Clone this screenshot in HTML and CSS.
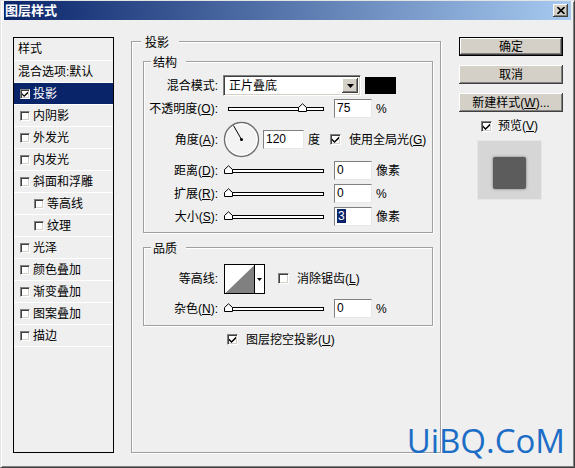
FILE: index.html
```html
<!DOCTYPE html>
<html lang="zh-CN">
  <head>
    <meta charset="UTF-8" />
    <meta name="viewport" content="width=device-width, initial-scale=1.0" />
    <title>图层样式</title>
    <link rel="stylesheet" href="styles.css">
  </head>
  <body>
    <div class="window">
      <div class="titlebar">
        <span class="title">图层样式</span>
        <span class="close">
          <svg width="8" height="7" viewBox="0 0 8 7">
            <path d="M0.5 0 L7.5 7 M7.5 0 L0.5 7" stroke="#000" stroke-width="1.6" />
          </svg>
        </span>
      </div>

      <div class="content">
        <div class="styles-list">
          <div class="list-head">样式</div>
          <div class="list-item plain">混合选项:默认</div>
          <div class="list-item selected"><span class="check small on"></span>投影</div>
          <div class="list-item"><span class="check small"></span>内阴影</div>
          <div class="list-item"><span class="check small"></span>外发光</div>
          <div class="list-item"><span class="check small"></span>内发光</div>
          <div class="list-item"><span class="check small"></span>斜面和浮雕</div>
          <div class="list-item sub"><span class="check small"></span>等高线</div>
          <div class="list-item sub"><span class="check small"></span>纹理</div>
          <div class="list-item"><span class="check small"></span>光泽</div>
          <div class="list-item"><span class="check small"></span>颜色叠加</div>
          <div class="list-item"><span class="check small"></span>渐变叠加</div>
          <div class="list-item"><span class="check small"></span>图案叠加</div>
          <div class="list-item"><span class="check small"></span>描边</div>
        </div>

        <div class="group outer">
          <div class="group-title">投影</div>

          <div class="group inner structure">
            <div class="group-title">结构</div>
            <div class="row first">
              <span class="label">混合模式:</span>
              <span class="select">
                <span class="select-text">正片叠底</span>
                <span class="drop">
                  <svg width="7" height="4" viewBox="0 0 7 4"><path d="M0 0 H7 L3.5 4 Z" fill="#000" /></svg>
                </span>
              </span>
              <span class="swatch"></span>
            </div>
            <div class="row">
              <span class="label">不透明度(<u>O</u>):</span>
              <span class="slider"><span class="track"></span><span class="thumb" style="left: 74px"></span></span>
              <span class="field">75</span>
              <span class="unit">%</span>
            </div>
            <div class="row angle">
              <span class="label">角度(<u>A</u>):</span>
              <svg class="dial" width="37" height="37" viewBox="0 0 37 37">
                <circle cx="18.5" cy="18.5" r="17" fill="#f3f3f3" stroke="#6f6f6f" stroke-width="1.4" />
                <circle cx="18.5" cy="18.5" r="15.6" fill="none" stroke="#ffffff" stroke-width="1" />
                <line x1="18.5" y1="18.5" x2="10.5" y2="4.6" stroke="#000" stroke-width="1" />
                <circle cx="18.5" cy="18.5" r="1.5" fill="#000" />
              </svg>
              <span class="field wide">120</span>
              <span class="unit">度</span>
              <span class="check on global"></span>
              <span class="check-label">使用全局光(<u>G</u>)</span>
            </div>
            <div class="row">
              <span class="label">距离(<u>D</u>):</span>
              <span class="slider"><span class="track"></span><span class="thumb" style="left: 0px"></span></span>
              <span class="field">0</span>
              <span class="unit">像素</span>
            </div>
            <div class="row">
              <span class="label">扩展(<u>R</u>):</span>
              <span class="slider"><span class="track"></span><span class="thumb" style="left: 0px"></span></span>
              <span class="field">0</span>
              <span class="unit">%</span>
            </div>
            <div class="row">
              <span class="label">大小(<u>S</u>):</span>
              <span class="slider"><span class="track"></span><span class="thumb" style="left: 0px"></span></span>
              <span class="field"><span class="selection">3</span></span>
              <span class="unit">像素</span>
            </div>
          </div>

          <div class="group inner quality">
            <div class="group-title">品质</div>
            <div class="row contour-row">
              <span class="label">等高线:</span>
              <svg class="contour" width="41" height="30" viewBox="0 0 41 30">
                <rect x="0.5" y="0.5" width="40" height="29" fill="#fff" stroke="#000" />
                <polygon points="1.5,29 30,1.5 30,29" fill="#808080" />
                <line x1="30.5" y1="1" x2="30.5" y2="29" stroke="#000" />
                <polygon points="33,14 38,14 35.5,17" fill="#000" />
              </svg>
              <span class="check antialias"></span>
              <span class="check-label">消除锯齿(<u>L</u>)</span>
            </div>
            <div class="row noise">
              <span class="label">杂色(<u>N</u>):</span>
              <span class="slider"><span class="track"></span><span class="thumb" style="left: 0px"></span></span>
              <span class="field">0</span>
              <span class="unit">%</span>
            </div>
          </div>

          <div class="knockout">
            <span class="check on"></span>
            <span class="check-label">图层挖空投影(<u>U</u>)</span>
          </div>
        </div>

        <div class="side">
          <div class="button default">确定</div>
          <div class="button">取消</div>
          <div class="button">新建样式(<u>W</u>)...</div>
          <div class="preview-check">
            <span class="check on"></span>
            <span class="check-label">预览(<u>V</u>)</span>
          </div>
          <div class="preview"><div class="preview-shape"></div></div>
        </div>
      </div>

      <div class="watermark">UiBQ.CoM</div>
    </div>
  </body>
</html>
```

FILE: styles.css
```css
body {
  margin: 0;
  font-family: "Liberation Sans", "Noto Sans CJK SC", sans-serif;
  font-size: 12px;
  color: #000;
}

.window {
  position: relative;
  width: 575px;
  height: 468px;
  box-sizing: border-box;
  background-color: #efefef;
  border: 1px solid;
  border-color: #e4e4e4 #404040 #404040 #e4e4e4;
  box-shadow: inset 1px 1px #fff, inset -1px -1px #808080;
  padding: 0 3px 3px 3px;
}

/* Title bar */
.titlebar {
  height: 19px;
  display: flex;
  align-items: center;
  justify-content: space-between;
  padding: 0 3px 0 1px;
  background: linear-gradient(to right, #0a246a, #a6caf0);
}

.title {
  color: #fff;
  font-weight: bold;
  font-size: 13px;
  line-height: 19px;
}

.close {
  width: 15px;
  height: 13px;
  display: flex;
  align-items: center;
  justify-content: center;
  background-color: #d4d0c8;
  box-shadow: inset -1px -1px #404040, inset 1px 1px #fff,
    inset -2px -2px #808080;
}

.content {
  display: flex;
  align-items: flex-start;
  padding: 17px 0 0 9px;
}

/* Style list */
.styles-list {
  width: 101px;
  height: 416px;
  box-sizing: border-box;
  border: 1px solid #000;
}

.list-head {
  height: 22px;
  line-height: 22px;
  padding-left: 4px;
  border-bottom: 1px solid #fff;
}

.list-item {
  height: 21px;
  display: flex;
  align-items: center;
  padding-left: 6px;
  border-bottom: 1px solid #fff;
  line-height: 14px;
}

.list-item.plain {
  padding-left: 4px;
}

.list-item.sub {
  padding-left: 20px;
}

.list-item .check {
  margin-right: 3px;
}

.list-item.selected {
  background-color: #0a246a;
  color: #fff;
}

/* Checkboxes */
.check {
  width: 11px;
  height: 11px;
  flex-shrink: 0;
  box-sizing: border-box;
  display: inline-flex;
  align-items: center;
  justify-content: center;
  background-color: #fff;
  border: 1px solid;
  border-color: #808080 #fff #fff #808080;
  box-shadow: inset 1px 1px #404040, inset -1px -1px #d4d0c8;
}

.check.small {
  width: 10px;
  height: 10px;
}

.check.on::after {
  content: "";
  width: 7px;
  height: 7px;
  background: url("data:image/svg+xml,%3Csvg xmlns='http://www.w3.org/2000/svg' viewBox='0 0 7 7'%3E%3Cpath d='M0 2.5 L2.5 5 L7 0.5 V2.8 L2.5 7 L0 4.5 Z' fill='%23000'/%3E%3C/svg%3E") no-repeat center / 7px 7px;
}

.check.small.on::after {
  width: 6px;
  height: 6px;
  background-size: 6px 6px;
}

.check-label {
  margin-left: 8px;
  line-height: 14px;
}

/* Group boxes */
.group {
  border: 1px solid #a0a0a0;
  box-shadow: inset 1px 1px #fff, 1px 1px #fff;
}

.group-title {
  width: fit-content;
  margin: -6px 0 0 9px;
  padding: 0 10px 0 4px;
  line-height: 14px;
  background-color: #efefef;
}

.outer {
  margin: 4px 0 0 17px;
  width: 310px;
  height: 412px;
  box-sizing: border-box;
}

.inner {
  width: 290px;
  box-sizing: border-box;
  margin: 11px 0 0 11px;
  padding-bottom: 4px;
}

.inner .group-title {
  margin-left: 7px;
  padding: 0 9px 0 2px;
}

.quality {
  margin-top: 14px;
  padding-bottom: 5px;
}

/* Form rows */
.row {
  height: 23px;
  display: flex;
  align-items: center;
}

.row.first {
  margin-top: 4px;
}

.row.angle {
  height: 39px;
}

.contour-row {
  height: 31px;
  margin-top: 7px;
}

.noise {
  margin-top: 3px;
}

.label {
  width: 74px;
  flex-shrink: 0;
  margin-right: 5px;
  text-align: right;
  line-height: 14px;
  white-space: nowrap;
}

.select {
  width: 138px;
  height: 21px;
  box-sizing: border-box;
  display: flex;
  align-items: center;
  padding: 2px;
  background-color: #fff;
  border: 1px solid;
  border-color: #808080 #fff #fff #808080;
  box-shadow: inset 1px 1px #404040, inset -1px -1px #d4d0c8;
}

.select-text {
  flex: 1;
  padding-left: 3px;
  line-height: 14px;
}

.drop {
  width: 16px;
  height: 15px;
  display: flex;
  align-items: center;
  justify-content: center;
  background-color: #d4d0c8;
  box-shadow: inset -1px -1px #404040, inset 1px 1px #fff,
    inset -2px -2px #808080;
}

.swatch {
  width: 31px;
  height: 17px;
  margin-left: 4px;
  background-color: #000;
}

.field {
  width: 38px;
  height: 19px;
  flex-shrink: 0;
  box-sizing: border-box;
  padding-left: 2px;
  line-height: 17px;
  background-color: #fff;
  border: 1px solid;
  border-color: #808080 #e8e8e8 #e8e8e8 #808080;
}

.field.wide {
  width: 41px;
  margin-left: 3px;
}

.selection {
  background-color: #0a246a;
  color: #fff;
  padding: 0 1px;
}

.unit {
  margin-left: 4px;
  line-height: 14px;
}

.global {
  margin-left: 10px;
}

/* Sliders */
.slider {
  position: relative;
  width: 104px;
  height: 9px;
  margin: 0 6px 0 1px;
  flex-shrink: 0;
}

.track {
  display: block;
  height: 4px;
  margin: 3px 4px 0;
  box-sizing: border-box;
  border: 1px solid #000;
  background-color: #fff;
}

.thumb {
  position: absolute;
  top: -1px;
  width: 9px;
  height: 9px;
  background: url("data:image/svg+xml,%3Csvg xmlns='http://www.w3.org/2000/svg' viewBox='0 0 9 9'%3E%3Cpath d='M0.5 8.5 V4.5 L4.5 0.8 L8.5 4.5 V8.5 Z' fill='%23fff' stroke='%23000'/%3E%3C/svg%3E") no-repeat;
}

.contour {
  display: block;
  margin-left: 1px;
}

.antialias {
  margin-left: 13px;
}

.knockout {
  height: 23px;
  display: flex;
  align-items: center;
  margin: 2px 0 0 95px;
}

/* Right column */
.side {
  width: 104px;
  margin-left: 18px;
  display: flex;
  flex-direction: column;
}

.button {
  height: 19px;
  box-sizing: border-box;
  display: flex;
  align-items: center;
  justify-content: center;
  line-height: 14px;
  background-color: #d4d0c8;
  box-shadow: inset -1px -1px #404040, inset 1px 1px #fff,
    inset -2px -2px #808080;
}

.button.default {
  border: 1px solid #000;
}

.button + .button {
  margin-top: 9px;
}

.preview-check {
  height: 18px;
  display: flex;
  align-items: center;
  margin: 5px 0 0 22px;
}

.check-label + .check-label,
.preview-check .check-label {
  margin-left: 6px;
}

.preview {
  width: 65px;
  height: 60px;
  box-sizing: border-box;
  margin: 5px 0 0 18px;
  padding-top: 6px;
  display: flex;
  align-items: center;
  justify-content: center;
  background-color: #d6d6d6;
  border: 1px solid #e6e6e6;
}

.preview-shape {
  width: 33px;
  height: 32px;
  border-radius: 2px;
  background-color: #5c5c5c;
  box-shadow: 0 0 3px rgba(0, 0, 0, 0.45);
}

/* Site watermark */
.watermark {
  position: absolute;
  right: 9px;
  top: 423px;
  font-family: "Open Sans", sans-serif;
  font-size: 33px;
  line-height: 33px;
  color: #1c6dc6;
}
```
